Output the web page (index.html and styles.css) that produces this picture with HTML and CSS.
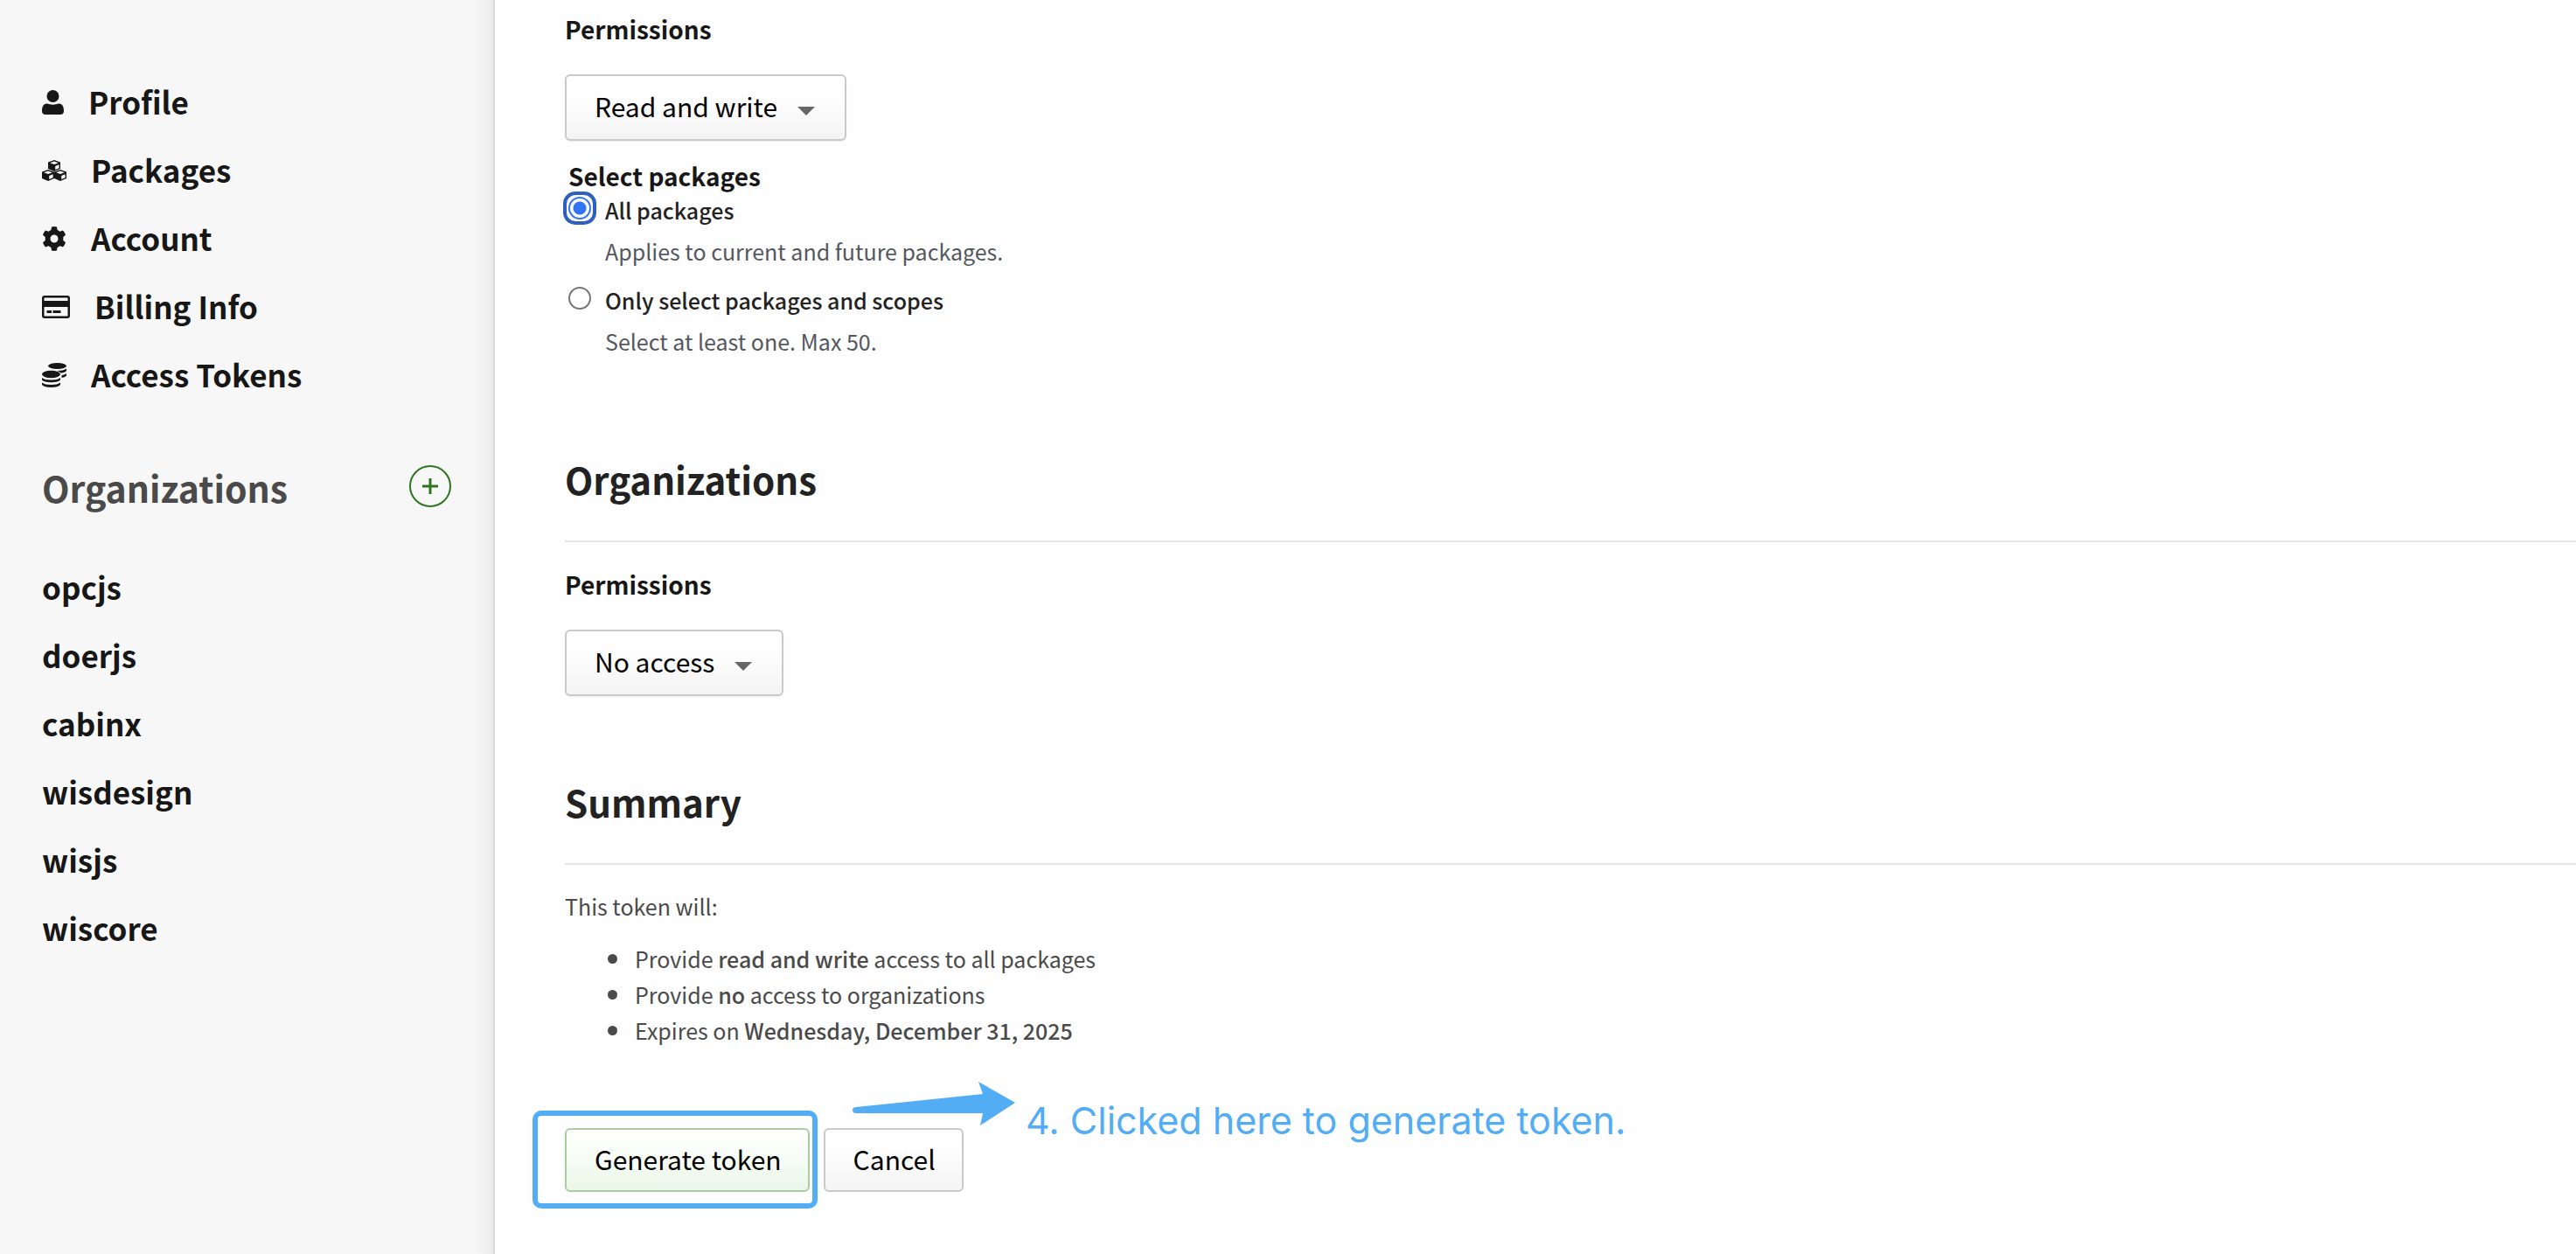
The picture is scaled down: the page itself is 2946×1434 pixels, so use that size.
FILE: index.html
```html
<!DOCTYPE html>
<html lang="en">
<head>
<meta charset="utf-8">
<title>New access token</title>
<link rel="stylesheet" href="styles.css">
</head>
<body>
<div class="page">
  <aside class="sidebar">
    <nav aria-label="Settings">
      <ul class="nav-list">
        <li><a class="nav-link" href="#profile"><svg width="25" height="28" viewBox="0 0 25 28" aria-hidden="true"><ellipse cx="12.500" cy="7" rx="7" ry="7"/><path d="M0 24C0 18 2 15.500 6.500 15.500C9 17 16 17 18.500 15.500C23 15.500 25 18 25 24C25 26.500 23.500 28 21 28H4C1.500 28 0 26.500 0 24Z"/></svg>Profile</a></li>
        <li><a class="nav-link" href="#packages"><svg width="28" height="24" viewBox="0 0 28 24" aria-hidden="true"><path d="M14 0L21 2.500V10L14 13L7 10V2.500Z"/><path d="M7 11L14 13.500V21L7 24L0 21V13.500Z"/><path d="M21 11L28 13.500V21L21 24L14 21V13.500Z"/><path class="cut" d="M14 1.500L18.800 3.200L14 5L9.200 3.200ZM7 12.500L11.800 14.200L7 16L2.200 14.200ZM21 12.500L25.800 14.200L21 16L16.200 14.200ZM15.200 7L19.600 5.200V9.200L15.200 11ZM8.200 18L12.600 16.200V20.200L8.200 22ZM22.200 18L26.600 16.200V20.200L22.200 22Z"/></svg>Packages</a></li>
        <li><a class="nav-link" href="#account"><svg width="28" height="28" viewBox="0 0 28 28" aria-hidden="true"><path fill-rule="evenodd" d="M11 .5Q14 -.3 17 .5L17.600 4Q19 4.500 20.500 5.700L24 4.500Q26.200 6.800 27 9.800L24.300 12.100V15.900L27 18.200Q26.200 21.200 24 23.500L20.500 22.300Q19 23.500 17.600 24L17 27.500Q14 28.300 11 27.500L10.400 24Q9 23.500 7.500 22.300L4 23.500Q1.800 21.200 1 18.200L3.700 15.900V12.100L1 9.800Q1.800 6.800 4 4.500L7.500 5.700Q9 4.500 10.400 4ZM14 9.500A4.500 4.500 0 1 0 14 18.500A4.500 4.500 0 1 0 14 9.500Z"/></svg>Account</a></li>
        <li><a class="nav-link" href="#billing"><svg width="32" height="26" viewBox="0 0 32 26" aria-hidden="true"><path fill-rule="evenodd" d="M3 0H29Q32 0 32 3V23Q32 26 29 26H3Q0 26 0 23V3Q0 0 3 0ZM3 2.500Q2.500 2.500 2.500 3V6H29.500V3Q29.500 2.500 29 2.500ZM2.500 13V23Q2.500 23.500 3 23.500H29Q29.500 23.500 29.500 23V13Z"/><path d="M5.500 17H11V20H5.500ZM12.500 17H21.500V20H12.500Z"/></svg>Billing Info</a></li>
        <li><a class="nav-link" href="#tokens"><svg width="28" height="28" viewBox="0 0 28 28" aria-hidden="true"><ellipse cx="17.500" cy="3.500" rx="10.500" ry="3.500"/><ellipse cx="10.500" cy="13" rx="10.500" ry="4.200"/><path d="M28 6.500V9Q26.500 11 21.500 11.500Q20 9.800 17 9Q25 9 28 6.500ZM28 12V14.500Q26.500 16.500 22.500 17V14.200Q26.500 13.500 28 12ZM0 17Q3 19.500 10.500 19.500T21 17V19.500Q18.500 22.200 10.500 22.200T0 19.500ZM0 22.500Q3 25 10.500 25T21 22.500V25Q18.500 28 10.500 28T0 25Z"/></svg>Access Tokens</a></li>
      </ul>
    </nav>
    <div class="org-head">
      <h2 class="org-title">Organizations</h2>
      <button class="add-button" type="button" aria-label="Add organization"><svg width="18" height="18" viewBox="0 0 18 18" aria-hidden="true"><path d="M9 0V18M0 9H18"/></svg></button>
    </div>
    <ul class="nav-list">
      <li><a class="nav-link" href="#opcjs">opcjs</a></li>
      <li><a class="nav-link" href="#doerjs">doerjs</a></li>
      <li><a class="nav-link" href="#cabinx">cabinx</a></li>
      <li><a class="nav-link" href="#wisdesign">wisdesign</a></li>
      <li><a class="nav-link" href="#wisjs">wisjs</a></li>
      <li><a class="nav-link" href="#wiscore">wiscore</a></li>
    </ul>
  </aside>
  <main class="content">
    <form>
      <section>
        <label class="field-label" for="package-access">Permissions</label>
        <div class="picker"><select id="package-access"><option>Read and write</option></select></div>
        <fieldset class="scope">
          <legend>Select packages</legend>
          <div class="option">
            <input type="radio" name="scope" id="scope-all" checked>
            <label for="scope-all">All packages</label>
            <p>Applies to current and future packages.</p>
          </div>
          <div class="option">
            <input type="radio" name="scope" id="scope-some">
            <label for="scope-some">Only select packages and scopes</label>
            <p>Select at least one. Max 50.</p>
          </div>
        </fieldset>
      </section>
      <section class="orgs">
        <h2 class="section-title">Organizations</h2>
        <label class="field-label" for="org-access">Permissions</label>
        <div class="picker"><select id="org-access"><option>No access</option></select></div>
      </section>
      <section class="summary">
        <h2 class="section-title">Summary</h2>
        <p>This token will:</p>
        <ul>
          <li>Provide <strong>read and write</strong> access to all packages</li>
          <li>Provide <strong>no</strong> access to organizations</li>
          <li>Expires on <strong>Wednesday, December 31, 2025</strong></li>
        </ul>
      </section>
      <div class="actions">
        <button class="button primary" type="submit">Generate token</button>
        <button class="button" type="button">Cancel</button>
        <div class="highlight"></div>
        <div class="callout">
          <svg width="186" height="52" viewBox="0 0 186 52" aria-hidden="true"><path d="M4 29L149 14L144 0L186 24L146 50L149 36H4Q0 36 0 32.500T4 29Z"/></svg>
          <span>4. Clicked here to generate token.</span>
        </div>
      </div>
    </form>
  </main>
</div>
</body>
</html>
```
FILE: styles.css
```css
* {
  box-sizing: border-box;
  margin: 0;
  padding: 0;
}

body {
  background: #fefefe;
  color: #171717;
  font-family: "Noto Sans CJK SC", "Noto Sans", sans-serif;
  font-size: 25px;
  line-height: 40px;
}

ul {
  list-style: none;
}

.page {
  display: flex;
  min-height: 100vh;
}

.sidebar {
  flex: none;
  width: 566px;
  padding: 77px 48px 0;
  border-right: 2px solid #d9d9d9;
  background: linear-gradient(to left, #ebebeb, #f7f7f7 20px);
}

.nav-link {
  display: flex;
  align-items: center;
  gap: 28px;
  color: inherit;
  font-size: 35px;
  font-weight: 600;
  line-height: 78px;
  text-decoration: none;
}

.nav-link svg {
  margin-top: 2px;
  fill: #171717;
}

.nav-link .cut {
  fill: #f7f7f7;
}

.org-head {
  display: flex;
  align-items: center;
  justify-content: space-between;
  padding: 59px 0 44px;
}

.org-title {
  color: #4a4a4a;
  font-size: 41px;
  font-weight: 600;
  line-height: 62px;
}

.add-button {
  display: grid;
  place-items: center;
  width: 48px;
  height: 48px;
  margin-bottom: 2px;
  border: 2px solid #2f7420;
  border-radius: 50%;
  background: none;
}

.add-button path {
  stroke: #2f7420;
  stroke-width: 3;
}

.content {
  flex: 1;
  padding: 12px 0 50px 80px;
}

.field-label {
  display: block;
  margin-bottom: 31px;
  font-size: 28px;
  font-weight: 600;
  line-height: 42px;
}

.picker {
  position: relative;
  width: max-content;
}

.picker::after {
  content: "";
  position: absolute;
  top: 37px;
  right: 36px;
  width: 20px;
  height: 10px;
  background: #666;
  clip-path: polygon(0 0, 100% 0, 50% 100%);
  pointer-events: none;
}

select,
.button {
  border: 2px solid #c9c9c9;
  border-radius: 6px;
  background: linear-gradient(#fff 20%, #f4f4f4);
  color: #000;
  font-family: inherit;
  font-size: 30px;
}

select {
  display: block;
  height: 76px;
  padding: 0 76px 4px 32px;
  appearance: none;
  box-shadow: 0 1px 2px #0001;
}

.scope {
  margin-top: 21px;
  border: 0;
}

.scope legend {
  padding: 0 4px;
  font-size: 28px;
  font-weight: 600;
  line-height: 38px;
}

.option {
  display: grid;
  grid-template-columns: 26px 1fr;
  column-gap: 16px;
  row-gap: 7px;
  padding: 0 4px 16px;
}

.option:last-child {
  padding-bottom: 0;
}

.option label {
  color: #222;
  font-weight: 500;
}

.option p {
  grid-column: 2;
  color: #54575e;
}

.option input {
  position: relative;
  width: 26px;
  height: 26px;
  margin-top: 5px;
  border: 2px solid #767676;
  border-radius: 50%;
  background: #fff;
  appearance: none;
}

.option input:checked {
  border-color: #3575f0;
  background: radial-gradient(circle, #3175f3 7px, #fff 8px);
}

.option input:checked::before {
  content: "";
  position: absolute;
  inset: -8px;
  border: 4px solid #2f60be;
  border-radius: 14px;
}

.orgs {
  margin-top: 107px;
}

.summary {
  margin-top: 90px;
  color: #4a4a4a;
}

.section-title {
  margin-bottom: 27px;
  padding-bottom: 39px;
  border-bottom: 2px solid #e6e6e6;
  color: #222;
  font-size: 42px;
  font-weight: 600;
  line-height: 62px;
}

.summary ul {
  padding: 20px 0 0 80px;
  line-height: 41px;
}

.summary li {
  position: relative;
}

.summary li::before {
  content: "";
  position: absolute;
  top: 15px;
  left: -31px;
  width: 11px;
  height: 11px;
  border-radius: 50%;
  background: currentColor;
}

strong {
  font-weight: 500;
}

.actions {
  position: relative;
  display: flex;
  gap: 16px;
  margin-top: 91px;
}

.button {
  height: 73px;
  padding: 0 30px 4px 32px;
}

.primary {
  border-color: #a9cda0;
  background: linear-gradient(#fff 10%, #e9f7e7);
}

.highlight {
  position: absolute;
  top: -20px;
  left: -37px;
  width: 326px;
  height: 112px;
  border: 6px solid #52adf5;
  border-radius: 10px;
  pointer-events: none;
}

.callout {
  position: absolute;
  top: -53px;
  left: 329px;
  display: flex;
  gap: 12px;
  color: #52adf5;
  font-family: Inter, sans-serif;
  font-size: 43px;
  line-height: 88px;
  white-space: nowrap;
}

.callout svg {
  fill: #52adf5;
}
```
